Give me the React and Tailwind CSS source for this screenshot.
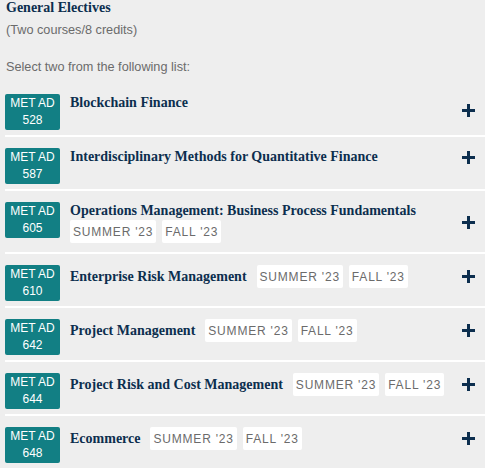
import React from 'react';

const courses = [
  { code: '528', title: 'Blockchain Finance', terms: [] },
  { code: '587', title: 'Interdisciplinary Methods for Quantitative Finance', terms: [] },
  { code: '605', title: 'Operations Management: Business Process Fundamentals', terms: ["SUMMER '23", "FALL '23"] },
  { code: '610', title: 'Enterprise Risk Management', terms: ["SUMMER '23", "FALL '23"] },
  { code: '642', title: 'Project Management', terms: ["SUMMER '23", "FALL '23"] },
  { code: '644', title: 'Project Risk and Cost Management', terms: ["SUMMER '23", "FALL '23"] },
  { code: '648', title: 'Ecommerce', terms: ["SUMMER '23", "FALL '23"] },
];

const serif = "font-['Liberation_Serif','Times_New_Roman',serif]";
const sans = "font-['Liberation_Sans',Arial,sans-serif]";

const PlusIcon = ({ className = '' }) => (
  <svg width="13" height="13" viewBox="0 0 13 13" className={`shrink-0 ${className}`}>
    <rect x="5" y="0" width="3" height="13" fill="#0c2e4e" />
    <rect x="0" y="5" width="13" height="3" fill="#0c2e4e" />
  </svg>
);

// the first row's plus sits against the badge, the rest against the title block
const CourseRow = ({ course, first }) => (
  <div className="flex items-start pt-[11px] pb-[5px] pr-[10px] border-b-2 border-white">
    <div className={`${sans} w-[55px] h-[36px] shrink-0 rounded-[2px] bg-[#127f84] text-white text-[12px] leading-[17px] flex flex-col items-center justify-center`}>
      <span>MET AD</span>
      <span>{course.code}</span>
    </div>
    <div className={`flex-1 flex items-center mb-[4px] ${first ? 'self-stretch' : ''}`}>
      <div className={`flex-1 flex flex-wrap items-center gap-x-[6px] pl-[10px] ${first ? 'self-start' : ''}`}>
        <span className={`${serif} font-bold text-[14px] leading-[18px] text-[#0c2e4e] mr-[4px]`}>
          {course.title}
        </span>
        {course.terms.map(t => (
          <span
            key={t}
            className={`${sans} bg-white rounded-[2px] h-[23px] px-[3px] flex items-center text-[12px] tracking-[0.8px] text-[#6b6b6b]`}
          >
            {t}
          </span>
        ))}
      </div>
      <PlusIcon className={first ? 'mb-[-1px]' : ''} />
    </div>
  </div>
);

export default function App() {
  return (
    <div className="min-h-screen bg-[#eeeeee] pl-[5px]">
      <div className={`${serif} font-bold text-[14px] leading-[14px] text-[#0c2e4e] pl-[1px] pt-[1px]`}>
        General Electives
      </div>
      <div className={`${sans} text-[12.7px] leading-[16px] text-[#6b6b6b] mt-[7px] pl-[1px]`}>
        (Two courses/8 credits)
      </div>
      <div className={`${sans} text-[12.7px] leading-[16px] text-[#6b6b6b] mt-[21px] pl-[1px] mb-[8px]`}>
        Select two from the following list:
      </div>
      <div>
        {courses.map((c, i) => (
          <CourseRow key={c.code} course={c} first={i === 0} />
        ))}
      </div>
    </div>
  );
}
